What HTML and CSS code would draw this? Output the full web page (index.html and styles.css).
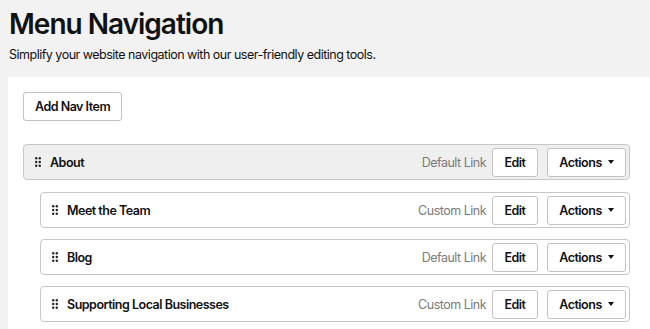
FILE: index.html
```html
<!DOCTYPE html>
<html lang="en">
<head>
    <meta charset="UTF-8">
    <meta name="viewport" content="width=device-width, initial-scale=1.0">
    <title>Menu Navigation</title>
    <link rel="stylesheet" href="styles.css">
</head>
<body>
    <header class="intro">
        <h1>Menu Navigation</h1>
        <p>Simplify your website navigation with our user-friendly editing tools.</p>
    </header>

    <main class="panel">
        <button class="btn">Add Nav Item</button>

        <ul class="nav-list">
            <li>
                <div class="nav-row parent">
                    <span class="handle">
                        <svg width="6" height="10" viewBox="0 0 6 10"><circle cx="1.2" cy="1.2" r="1.2"/><circle cx="4.8" cy="1.2" r="1.2"/><circle cx="1.2" cy="5" r="1.2"/><circle cx="4.8" cy="5" r="1.2"/><circle cx="1.2" cy="8.8" r="1.2"/><circle cx="4.8" cy="8.8" r="1.2"/></svg>
                    </span>
                    <span class="label">About</span>
                    <span class="type">Default Link</span>
                    <button class="btn edit">Edit</button>
                    <button class="btn actions">Actions <span class="caret"></span></button>
                </div>
                <ul class="nav-list child">
                    <li>
                        <div class="nav-row">
                            <span class="handle">
                                <svg width="6" height="10" viewBox="0 0 6 10"><circle cx="1.2" cy="1.2" r="1.2"/><circle cx="4.8" cy="1.2" r="1.2"/><circle cx="1.2" cy="5" r="1.2"/><circle cx="4.8" cy="5" r="1.2"/><circle cx="1.2" cy="8.8" r="1.2"/><circle cx="4.8" cy="8.8" r="1.2"/></svg>
                            </span>
                            <span class="label">Meet the Team</span>
                            <span class="type">Custom Link</span>
                            <button class="btn edit">Edit</button>
                            <button class="btn actions">Actions <span class="caret"></span></button>
                        </div>
                    </li>
                    <li>
                        <div class="nav-row">
                            <span class="handle">
                                <svg width="6" height="10" viewBox="0 0 6 10"><circle cx="1.2" cy="1.2" r="1.2"/><circle cx="4.8" cy="1.2" r="1.2"/><circle cx="1.2" cy="5" r="1.2"/><circle cx="4.8" cy="5" r="1.2"/><circle cx="1.2" cy="8.8" r="1.2"/><circle cx="4.8" cy="8.8" r="1.2"/></svg>
                            </span>
                            <span class="label">Blog</span>
                            <span class="type">Default Link</span>
                            <button class="btn edit">Edit</button>
                            <button class="btn actions">Actions <span class="caret"></span></button>
                        </div>
                    </li>
                    <li>
                        <div class="nav-row">
                            <span class="handle">
                                <svg width="6" height="10" viewBox="0 0 6 10"><circle cx="1.2" cy="1.2" r="1.2"/><circle cx="4.8" cy="1.2" r="1.2"/><circle cx="1.2" cy="5" r="1.2"/><circle cx="4.8" cy="5" r="1.2"/><circle cx="1.2" cy="8.8" r="1.2"/><circle cx="4.8" cy="8.8" r="1.2"/></svg>
                            </span>
                            <span class="label">Supporting Local Businesses</span>
                            <span class="type">Custom Link</span>
                            <button class="btn edit">Edit</button>
                            <button class="btn actions">Actions <span class="caret"></span></button>
                        </div>
                    </li>
                </ul>
            </li>
        </ul>
    </main>
</body>
</html>
```

FILE: styles.css
```css
body {
    margin: 0;
    font-family: Inter, "Noto Sans", sans-serif;
    color: #111;
    background-color: #f2f2f2;
}
.intro {
    padding: 6px 9px 0;
}
.intro h1 {
    margin: 0;
    font-size: 28px;
    line-height: 36px;
    font-weight: 600;
    letter-spacing: -1px;
}
.intro p {
    margin: 4px 0 0;
    font-size: 12.5px;
    line-height: 18px;
    letter-spacing: -0.5px;
}
.panel {
    margin: 13px 0 0 8px;
    padding: 15px 20px 20px 15px;
    background-color: #fff;
}
.btn {
    display: inline-flex;
    align-items: center;
    justify-content: center;
    height: 29px;
    padding: 0 11px;
    font-family: inherit;
    font-size: 12.5px;
    font-weight: 600;
    letter-spacing: -0.5px;
    white-space: nowrap;
    color: #111;
    background-color: #fff;
    border: 1px solid #c2c2c2;
    border-radius: 3px;
}
.nav-list {
    list-style: none;
    margin: 23px 0 0;
    padding: 0;
}
.nav-list.child {
    margin: 12px 0 0 17px;
}
.nav-list.child li + li {
    margin-top: 11px;
}
.nav-row {
    display: flex;
    align-items: center;
    height: 34px;
    padding: 0 3px 0 11px;
    background-color: #fff;
    border: 1px solid #c6c6c6;
    border-radius: 4px;
}
.nav-row.parent {
    background-color: #efefef;
}
.handle {
    display: flex;
    width: 6px;
    fill: #222;
}
.label {
    flex: 1;
    margin-left: 9px;
    font-size: 12.5px;
    font-weight: 600;
    letter-spacing: -0.5px;
}
.type {
    margin-right: 6px;
    font-size: 12.5px;
    letter-spacing: -0.5px;
    color: #7a7a7a;
}
.edit {
    width: 46px;
}
.actions {
    width: 79px;
    margin-left: 9px;
}
.caret {
    margin-left: 6px;
    border-left: 3.5px solid transparent;
    border-right: 3.5px solid transparent;
    border-top: 4px solid #111;
}
```
